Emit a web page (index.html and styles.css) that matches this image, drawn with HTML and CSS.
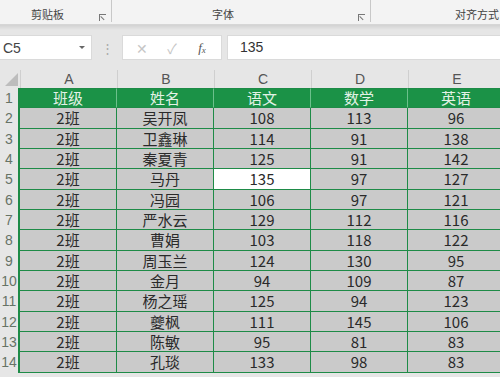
FILE: index.html
```html
<!DOCTYPE html>
<html lang="zh-CN">
<head>
    <meta charset="UTF-8">
    <meta name="viewport" content="width=device-width, initial-scale=1.0">
    <title>成绩表</title>
    <link rel="stylesheet" href="styles.css">
</head>
<body>
    <!-- 功能区分组标签 -->
    <div class="ribbon">
        <div class="group group-clip">
            <span class="group-label">剪贴板</span>
            <span class="launcher"></span>
        </div>
        <div class="group group-font">
            <span class="group-label">字体</span>
            <span class="launcher"></span>
        </div>
        <div class="group group-align">
            <span class="group-label">对齐方式</span>
        </div>
    </div>
    <div class="ribbon-shadow"></div>

    <!-- 编辑栏 -->
    <div class="formula-bar">
        <div class="name-box">
            <span>C5</span>
            <span class="caret"></span>
        </div>
        <div class="grip">⋮</div>
        <div class="fx-buttons">
            <span class="fx-btn">✕</span>
            <span class="fx-btn">✓</span>
            <span class="fx-btn fx">f<sub>x</sub></span>
        </div>
        <div class="formula-input">135</div>
    </div>

    <!-- 工作表 -->
    <div class="sheet" id="sheet">
        <div class="corner"><span class="corner-tri"></span></div>
        <div class="col-head">A</div>
        <div class="col-head">B</div>
        <div class="col-head">C</div>
        <div class="col-head">D</div>
        <div class="col-head">E</div>
    </div>

    <script>
        // 表格数据：班级、姓名、语文、数学、英语
        const filas = [
            ['2班', '吴开凤', 108, 113, 96],
            ['2班', '卫鑫琳', 114, 91, 138],
            ['2班', '秦夏青', 125, 91, 142],
            ['2班', '马丹', 135, 97, 127],
            ['2班', '冯园', 106, 97, 121],
            ['2班', '严水云', 129, 112, 116],
            ['2班', '曹娟', 103, 118, 122],
            ['2班', '周玉兰', 124, 130, 95],
            ['2班', '金月', 94, 109, 87],
            ['2班', '杨之瑶', 125, 94, 123],
            ['2班', '夔枫', 111, 145, 106],
            ['2班', '陈敏', 95, 81, 83],
            ['2班', '孔琰', 133, 98, 83]
        ];
        const cabecera = ['班级', '姓名', '语文', '数学', '英语'];
        const sheet = document.getElementById('sheet');

        function celda(texto, clase) {
            const div = document.createElement('div');
            div.className = clase;
            div.textContent = texto;
            sheet.appendChild(div);
        }

        celda('1', 'row-head');
        cabecera.forEach(t => celda(t, 'cell head'));

        filas.forEach((fila, i) => {
            celda(String(i + 2), 'row-head');
            fila.forEach((valor, j) => {
                // C5 es la celda seleccionada
                const activa = (i + 2 === 5 && j === 2);
                celda(valor, activa ? 'cell active' : 'cell');
            });
        });
    </script>
</body>
</html>
```
FILE: styles.css
```css
html, body {
    margin: 0;
    padding: 0;
}
body {
    width: 500px;
    height: 377px;
    overflow: hidden;
    background-color: #e6e6e6;
    font-family: "Noto Sans CJK SC", "Noto Sans", sans-serif;
    color: #333;
}

/* Ribbon */
.ribbon {
    display: flex;
    height: 24px;
    background-color: #f3f3f3;
    border-bottom: 1px solid #d6d6d6;
}
.group {
    position: relative;
    display: flex;
    align-items: center;
    justify-content: center;
    height: 22px;
    border-right: 1px solid #c8c8c8;
}
.group-clip {
    width: 111px;
}
.group-font {
    width: 258px;
}
.group-align {
    flex: 1;
    border-right: none;
    justify-content: flex-end;
    padding-right: 1px;
}
.group-label {
    font-size: 11px;
    color: #444;
    padding-top: 6px;
}
.group-clip .group-label {
    margin-left: -16px;
}
.group-font .group-label {
    margin-left: -36px;
}
.launcher {
    position: absolute;
    right: 5px;
    bottom: 1px;
    width: 6px;
    height: 6px;
    border-left: 1px solid #777;
    border-top: 1px solid #777;
}
.launcher::after {
    content: "";
    position: absolute;
    left: 1px;
    top: 1px;
    width: 5px;
    height: 1px;
    background-color: #777;
    transform: rotate(45deg);
    transform-origin: 0 0;
}
.ribbon-shadow {
    height: 5px;
    background: linear-gradient(#d2d2d2, #e6e6e6);
}

/* Formula bar */
.formula-bar {
    display: flex;
    align-items: stretch;
    height: 25px;
    padding: 5px 0 10px 0;
}
.name-box {
    width: 92px;
    background-color: #fff;
    border: 1px solid #dadada;
    border-left: none;
    box-sizing: border-box;
    display: flex;
    align-items: center;
    justify-content: space-between;
    padding: 0 6px 0 3px;
    font-family: "Liberation Sans", sans-serif;
    font-size: 14px;
    color: #444;
}
.caret {
    width: 0;
    height: 0;
    border-left: 3px solid transparent;
    border-right: 3px solid transparent;
    border-top: 3px solid #666;
}
.grip {
    width: 30px;
    text-align: center;
    color: #aaa;
    font-size: 13px;
    line-height: 25px;
}
.fx-buttons {
    width: 100px;
    background-color: #fff;
    border: 1px solid #dadada;
    box-sizing: border-box;
    display: flex;
    align-items: center;
    justify-content: space-around;
    padding: 0 4px;
}
.fx-btn {
    color: #c6c6c6;
    font-size: 14px;
    width: 24px;
    text-align: center;
}
.fx {
    color: #555;
    font-family: "Liberation Serif", serif;
    font-style: italic;
    font-size: 13px;
}
.fx sub {
    font-size: 9px;
    vertical-align: -1px;
}
.formula-input {
    flex: 1;
    margin-left: 5px;
    background-color: #fff;
    border: 1px solid #dadada;
    border-right: none;
    box-sizing: border-box;
    padding-left: 12px;
    line-height: 23px;
    font-family: "Liberation Sans", sans-serif;
    font-size: 14px;
    color: #333;
}

/* Sheet */
.sheet {
    display: grid;
    grid-template-columns: 20px repeat(5, 97px);
    grid-template-rows: 18px;
    grid-auto-rows: 20.35px;
    background-color: #e6e6e6;
}
.corner {
    position: relative;
    background-color: #e6e6e6;
}
.corner-tri {
    position: absolute;
    right: 2px;
    bottom: 2px;
    width: 0;
    height: 0;
    border-left: 13px solid transparent;
    border-bottom: 13px solid #bdbdbd;
}
.col-head {
    background-color: #e6e6e6;
    border-left: 1px solid #cfcfcf;
    text-align: center;
    font-family: "Liberation Sans", sans-serif;
    font-size: 14px;
    line-height: 18px;
    color: #555;
}
.row-head {
    text-align: center;
    font-family: "Liberation Sans", sans-serif;
    font-size: 14px;
    line-height: 21px;
    color: #667366;
    border-right: 2px solid #1e8b47;
    box-sizing: border-box;
}
.cell {
    background-color: #cacaca;
    border-right: 1px solid #1e8b47;
    border-bottom: 1px solid #1e8b47;
    box-sizing: border-box;
    text-align: center;
    font-size: 15px;
    line-height: 19px;
    color: #2a2a2a;
    overflow: hidden;
    white-space: nowrap;
}
.cell.head {
    background-color: #1b9247;
    color: #e3f2e6;
    border-top: 1px solid #1e8b47;
    border-right-color: #6cc08c;
    line-height: 18px;
}
.cell.active {
    background-color: #fff;
}
```
